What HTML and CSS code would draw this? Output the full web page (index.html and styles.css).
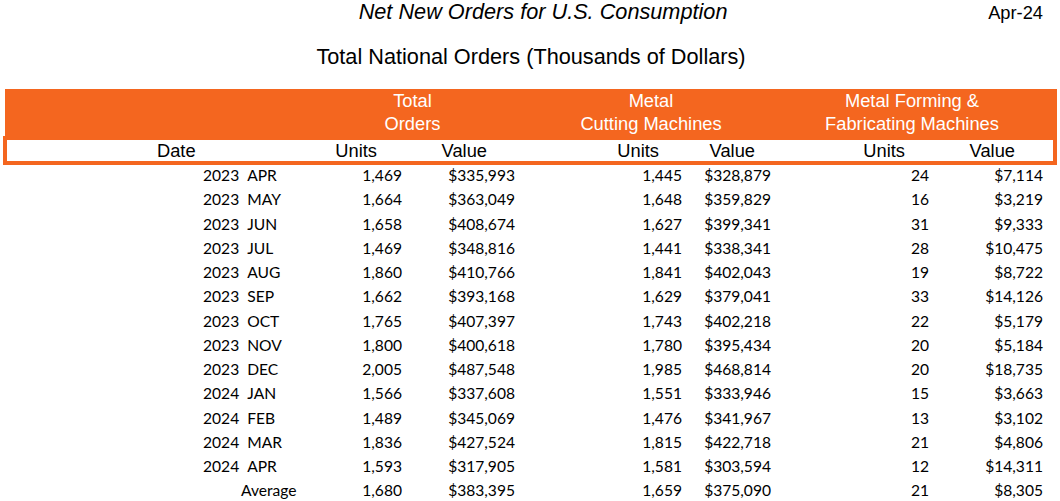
FILE: index.html
```html
<!DOCTYPE html>
<html lang="en">
<head>
<meta charset="utf-8">
<title>Net New Orders for U.S. Consumption</title>
<link rel="stylesheet" href="styles.css">
</head>
<body>
<header class="report-head">
  <div class="topline">
    <h1 class="subtitle">Net New Orders for U.S. Consumption</h1>
    <span class="period">Apr-24</span>
  </div>
  <h2 class="title">Total National Orders (Thousands of Dollars)</h2>
</header>

<section class="report">
  <div class="groups">
    <div class="group g1">Total<br>Orders</div>
    <div class="group g2">Metal<br>Cutting Machines</div>
    <div class="group g3">Metal Forming &amp;<br>Fabricating Machines</div>
  </div>
  <div class="colhead">
    <div class="ch date">Date</div>
    <div class="ch u1">Units</div>
    <div class="ch v1">Value</div>
    <div class="ch u2">Units</div>
    <div class="ch v2">Value</div>
    <div class="ch u3">Units</div>
    <div class="ch v3">Value</div>
  </div>
  <div class="rows">
    <div class="row"><div class="d"><span class="yr">2023</span><span class="mo">APR</span></div><div class="n">1,469</div><div class="n">$335,993</div><div class="n">1,445</div><div class="n">$328,879</div><div class="n">24</div><div class="n">$7,114</div></div>
    <div class="row"><div class="d"><span class="yr">2023</span><span class="mo">MAY</span></div><div class="n">1,664</div><div class="n">$363,049</div><div class="n">1,648</div><div class="n">$359,829</div><div class="n">16</div><div class="n">$3,219</div></div>
    <div class="row"><div class="d"><span class="yr">2023</span><span class="mo">JUN</span></div><div class="n">1,658</div><div class="n">$408,674</div><div class="n">1,627</div><div class="n">$399,341</div><div class="n">31</div><div class="n">$9,333</div></div>
    <div class="row"><div class="d"><span class="yr">2023</span><span class="mo">JUL</span></div><div class="n">1,469</div><div class="n">$348,816</div><div class="n">1,441</div><div class="n">$338,341</div><div class="n">28</div><div class="n">$10,475</div></div>
    <div class="row"><div class="d"><span class="yr">2023</span><span class="mo">AUG</span></div><div class="n">1,860</div><div class="n">$410,766</div><div class="n">1,841</div><div class="n">$402,043</div><div class="n">19</div><div class="n">$8,722</div></div>
    <div class="row"><div class="d"><span class="yr">2023</span><span class="mo">SEP</span></div><div class="n">1,662</div><div class="n">$393,168</div><div class="n">1,629</div><div class="n">$379,041</div><div class="n">33</div><div class="n">$14,126</div></div>
    <div class="row"><div class="d"><span class="yr">2023</span><span class="mo">OCT</span></div><div class="n">1,765</div><div class="n">$407,397</div><div class="n">1,743</div><div class="n">$402,218</div><div class="n">22</div><div class="n">$5,179</div></div>
    <div class="row"><div class="d"><span class="yr">2023</span><span class="mo">NOV</span></div><div class="n">1,800</div><div class="n">$400,618</div><div class="n">1,780</div><div class="n">$395,434</div><div class="n">20</div><div class="n">$5,184</div></div>
    <div class="row"><div class="d"><span class="yr">2023</span><span class="mo">DEC</span></div><div class="n">2,005</div><div class="n">$487,548</div><div class="n">1,985</div><div class="n">$468,814</div><div class="n">20</div><div class="n">$18,735</div></div>
    <div class="row"><div class="d"><span class="yr">2024</span><span class="mo">JAN</span></div><div class="n">1,566</div><div class="n">$337,608</div><div class="n">1,551</div><div class="n">$333,946</div><div class="n">15</div><div class="n">$3,663</div></div>
    <div class="row"><div class="d"><span class="yr">2024</span><span class="mo">FEB</span></div><div class="n">1,489</div><div class="n">$345,069</div><div class="n">1,476</div><div class="n">$341,967</div><div class="n">13</div><div class="n">$3,102</div></div>
    <div class="row"><div class="d"><span class="yr">2024</span><span class="mo">MAR</span></div><div class="n">1,836</div><div class="n">$427,524</div><div class="n">1,815</div><div class="n">$422,718</div><div class="n">21</div><div class="n">$4,806</div></div>
    <div class="row"><div class="d"><span class="yr">2024</span><span class="mo">APR</span></div><div class="n">1,593</div><div class="n">$317,905</div><div class="n">1,581</div><div class="n">$303,594</div><div class="n">12</div><div class="n">$14,311</div></div>
    <div class="row"><div class="d avg">Average</div><div class="n">1,680</div><div class="n">$383,395</div><div class="n">1,659</div><div class="n">$375,090</div><div class="n">21</div><div class="n">$8,305</div></div>
  </div>
</section>
</body>
</html>
```

FILE: styles.css
```css
html, body {
  margin: 0;
  padding: 0;
  background: #ffffff;
  color: #000000;
  width: 1060px;
  overflow: hidden;
}

body {
  font-family: "Liberation Sans", Arial, sans-serif;
}

/* ---------- page titles ---------- */
.topline {
  display: flex;
  align-items: baseline;
  height: 24px;
}

.subtitle {
  flex: 1;
  margin: 0;
  padding-left: 98px;
  text-align: center;
  font-size: 21.7px;
  font-style: italic;
  font-weight: normal;
  line-height: 24px;
}

.period {
  padding-right: 17px;
  font-size: 18.3px;
  line-height: 24px;
}

.title {
  margin: 21px 0 0 0;
  padding-left: 2px;
  text-align: center;
  font-size: 21.7px;
  font-weight: normal;
  line-height: 24px;
}

/* ---------- table header ---------- */
.report {
  margin-top: 20px;
}

.groups {
  display: grid;
  grid-template-columns: 325px 165px 45px 222px 38px 224px 1fr;
  margin-left: 5px;
  width: 1052px;
  height: 47px;
  background: #f4661f;
  color: #ffffff;
  font-size: 18.3px;
  line-height: 23px;
}

.group {
  text-align: center;
  white-space: nowrap;
}

.g1 { grid-column: 2; }
.g2 { grid-column: 4; }
.g3 { grid-column: 6; }

.colhead {
  display: grid;
  grid-template-columns: 313px 82px 113px 167px 89px 158px 114px;
  box-sizing: border-box;
  margin-left: 3px;
  width: 1054px;
  height: 29px;
  border: 4px solid #f4661f;
  font-size: 18.3px;
  line-height: 18px;
}

.ch {
  text-align: right;
  white-space: nowrap;
  padding-top: 2px;
}

.ch.date { text-align: left; padding-left: 150px; }
.ch.u1 { padding-right: 25px; }
.ch.v1 { padding-right: 28px; }
.ch.u2 { padding-right: 23px; }
.ch.v2 { padding-right: 16px; }
.ch.u3 { padding-right: 24px; }
.ch.v3 { padding-right: 28px; }

/* ---------- data rows ---------- */
.rows {
  margin-top: -2px;
  font-family: Lato, "Open Sans", sans-serif;
  font-size: 15.6px;
  line-height: 24.27px;
}

.row {
  display: grid;
  grid-template-columns: 320px 82px 113px 167px 89px 158px 114px;
}

.d {
  display: flex;
  gap: 8px;
  padding-left: 203px;
  white-space: nowrap;
}

.d.avg {
  padding-left: 241px;
}

.n {
  text-align: right;
  white-space: nowrap;
}
```
